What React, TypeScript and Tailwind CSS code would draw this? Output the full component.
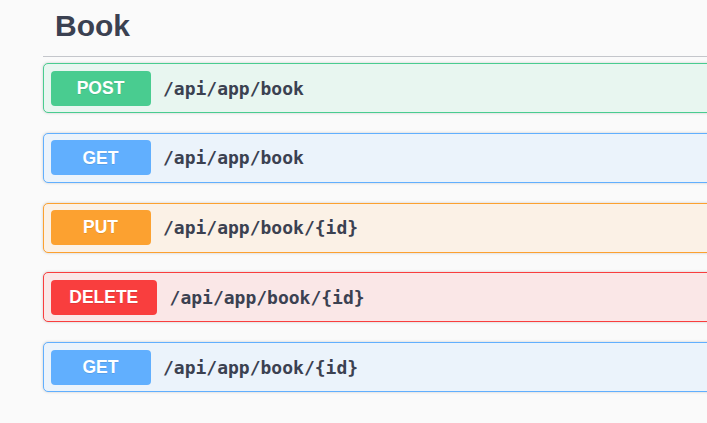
const ops = [
  { method: 'POST', path: '/api/app/book', box: 'bg-[#e8f6f0] border-[#49cc90]', badge: 'bg-[#49cc90]' },
  { method: 'GET', path: '/api/app/book', box: 'bg-[#ebf3fb] border-[#61affe]', badge: 'bg-[#61affe]' },
  { method: 'PUT', path: '/api/app/book/{id}', box: 'bg-[#fbf1e6] border-[#fca130]', badge: 'bg-[#fca130]' },
  { method: 'DELETE', path: '/api/app/book/{id}', box: 'bg-[#fae7e7] border-[#f93e3e]', badge: 'bg-[#f93e3e]' },
  { method: 'GET', path: '/api/app/book/{id}', box: 'bg-[#ebf3fb] border-[#61affe]', badge: 'bg-[#61affe]' },
];

function OpBlock({ method, path, box, badge }: (typeof ops)[number]) {
  return (
    <div className={`flex items-center h-[50px] border rounded-[5px] shadow-[0_0_3px_rgba(0,0,0,0.19)] px-[6.5px] ${box}`}>
      <span
        className={`flex items-center justify-center min-w-[100px] h-[35px] px-[18.75px] rounded-[4px] text-white font-bold text-[17.5px] [text-shadow:0_1px_0_rgba(0,0,0,0.1)] ${badge}`}
        style={{ fontFamily: '"Liberation Sans", Arial, sans-serif' }}
      >
        {method}
      </span>
      <span
        className="pl-[12.5px] text-[18px] font-bold text-[#3b4151]"
        style={{ fontFamily: '"DejaVu Sans Mono", monospace' }}
      >
        {path}
      </span>
    </div>
  );
}

export default function App() {
  return (
    <div className="w-full h-[423px] overflow-hidden bg-[#fafafa]">
      <div className="pl-[43px] w-[900px]">
        {/* Tag header */}
        <div className="pl-[12px] pt-[8.5px] pb-[12.5px] border-b-[1.25px] border-[#c4c6cb] mb-[6.5px]">
          <h3
            className="text-[30px] leading-[34.5px] font-bold text-[#3b4151]"
            style={{ fontFamily: '"Liberation Sans", Arial, sans-serif' }}
          >
            Book
          </h3>
        </div>

        {/* Operations */}
        <div className="flex flex-col gap-[19.75px]">
          {ops.map((op, i) => (
            <OpBlock key={i} {...op} />
          ))}
        </div>
      </div>
    </div>
  );
}
